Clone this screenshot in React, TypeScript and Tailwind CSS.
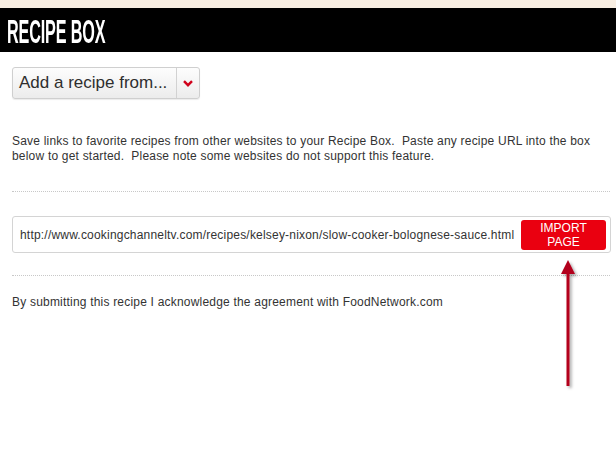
import React from 'react';

const Arrow: React.FC = () => (
  <svg className="absolute left-[554px] top-[256px]" width="30" height="136" viewBox="0 0 30 136">
    <defs>
      <filter id="sh" x="-50%" y="-10%" width="200%" height="120%">
        <feDropShadow dx="2" dy="2" stdDeviation="1.5" floodColor="#000" floodOpacity="0.35" />
      </filter>
    </defs>
    <g filter="url(#sh)">
      <rect x="12.5" y="14" width="3" height="116" fill="#b3001b" />
      <polygon points="14,4 7,18 21,18" fill="#b3001b" />
    </g>
  </svg>
);

export default function App() {
  return (
    <div className="relative w-[616px] h-[462px] bg-white overflow-hidden font-['Liberation_Sans',Arial,sans-serif] text-[#333]">
      {/* Header */}
      <div className="h-[8px] bg-[#f8eee2]" />
      <div className="h-[44px] bg-black flex items-center pl-[7px]">
        <span className="inline-block origin-left scale-x-[0.49] text-white font-bold text-[33px] leading-none whitespace-nowrap tracking-[-0.3px] mt-[3px]">
          RECIPE BOX
        </span>
      </div>

      <div className="px-[12px]">
        {/* Dropdown */}
        <div className="mt-[15px] flex w-[188px] h-[32px] rounded-[3px] border border-[#cfcfcf] bg-gradient-to-b from-[#fdfdfd] to-[#ececec] shadow-[0_1px_1px_rgba(0,0,0,0.08)]">
          <div className="flex-1 flex items-center pl-[6px] text-[17px] text-[#2e2e2e] whitespace-nowrap">
            Add a recipe from...
          </div>
          <div className="w-[23px] border-l border-[#d2d2d2] flex items-center justify-center">
            <svg width="10" height="7" viewBox="0 0 10 7">
              <path d="M1 1.2 L5 5.2 L9 1.2" fill="none" stroke="#d0021b" strokeWidth="2.4" />
            </svg>
          </div>
        </div>

        {/* Description */}
        <p className="mt-[35px] text-[12px] leading-[15px] tracking-[0.2px] text-[#333]">
          Save links to favorite recipes from other websites to your Recipe Box.&nbsp; Paste any recipe URL into the box
          <br />
          below to get started.&nbsp; Please note some websites do not support this feature.
        </p>

        <div className="mt-[27px] border-t border-dotted border-[#c8c8c8] w-[598px]" />

        {/* URL input */}
        <div className="mt-[24px] w-[599px] h-[37px] rounded-[3px] border border-[#d4d4d4] flex items-center justify-between pl-[7px] pr-[4px]">
          <span className="text-[12px] tracking-[0.2px] text-[#333] whitespace-nowrap">
            http://www.cookingchanneltv.com/recipes/kelsey-nixon/slow-cooker-bolognese-sauce.html
          </span>
          <button className="w-[85px] h-[30px] rounded-[3px] bg-[#ea0010] text-white text-[12px] leading-[14px] flex flex-col items-center justify-center">
            <span>IMPORT</span>
            <span>PAGE</span>
          </button>
        </div>

        <div className="mt-[22px] border-t border-dotted border-[#c8c8c8] w-[598px]" />

        <p className="mt-[19px] text-[12px] leading-[15px] tracking-[0.2px] text-[#333]">
          By submitting this recipe I acknowledge the agreement with FoodNetwork.com
        </p>
      </div>

      <Arrow />
    </div>
  );
}
